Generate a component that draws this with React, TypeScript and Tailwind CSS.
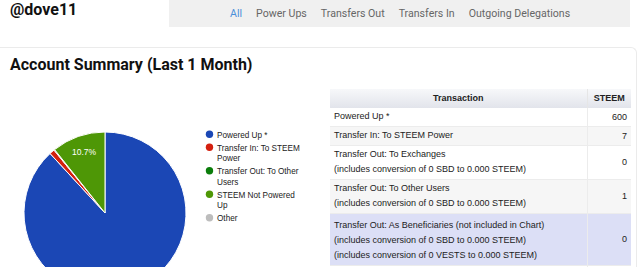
import React from "react"

const rows = [
  { lines: ["Powered Up *"], value: "600", bg: "bg-white", pad: "pt-[1px] pb-[2px]" },
  { lines: ["Transfer In: To STEEM Power"], value: "7", bg: "bg-[#f6f6f6]", pad: "pt-[1px] pb-[2px]" },
  {
    lines: ["Transfer Out: To Exchanges", "(includes conversion of 0 SBD to 0.000 STEEM)"],
    value: "0",
    bg: "bg-white",
    pad: "pt-[1px] pb-[2px]",
  },
  {
    lines: ["Transfer Out: To Other Users", "(includes conversion of 0 SBD to 0.000 STEEM)"],
    value: "1",
    bg: "bg-[#f6f6f6]",
    pad: "pt-[1px] pb-[2px]",
  },
  {
    lines: [
      "Transfer Out: As Beneficiaries (not included in Chart)",
      "(includes conversion of 0 SBD to 0.000 STEEM)",
      "(includes conversion of 0 VESTS to 0.000 STEEM)",
    ],
    value: "0",
    bg: "bg-[#dcdff6]",
    pad: "pt-[4px] pb-[2px]",
  },
  { lines: [""], value: "", bg: "bg-white", pad: "pt-[1px] pb-[2px]" },
]

const slices = [
  { value: 600, color: "#1b47b5" },
  { value: 7, color: "#d4200f" },
  { value: 1, color: "#0b7d0b" },
  { value: 72.8, color: "#4e9706" },
]

const legend = [
  { lines: ["Powered Up *"], color: "#1b47b5" },
  { lines: ["Transfer In: To STEEM", "Power"], color: "#d4200f" },
  { lines: ["Transfer Out: To Other", "Users"], color: "#0b7d0b" },
  { lines: ["STEEM Not Powered", "Up"], color: "#4e9706" },
  { lines: ["Other"], color: "#bdbdbd" },
]

const cx = 105
const cy = 126
const r = 81

function point(f: number) {
  const a = f * Math.PI * 2
  return [cx + r * Math.sin(a), cy - r * Math.cos(a)]
}

function PieChart() {
  const total = slices.reduce((s, x) => s + x.value, 0)
  let acc = 0
  const paths = slices.map((s) => {
    const start = acc / total
    acc += s.value
    const end = acc / total
    const [x1, y1] = point(start)
    const [x2, y2] = point(end)
    const large = end - start > 0.5 ? 1 : 0
    return {
      d: `M ${cx} ${cy} L ${x1} ${y1} A ${r} ${r} 0 ${large} 1 ${x2} ${y2} Z`,
      color: s.color,
    }
  })

  let y = 47.3
  return (
    <svg width="330" height="180" className="block shrink-0">
      {paths.map((p, i) => (
        <path key={i} d={p.d} fill={p.color} stroke="#ffffff" strokeWidth="1" />
      ))}
      <text x="84" y="68" textAnchor="middle" fill="#ffffff" fontSize="8.5" fontFamily="'Liberation Sans', Arial, sans-serif">
        10.7%
      </text>
      {legend.map((item, i) => {
        const top = y
        y += item.lines.length * 10.5 + 2.5
        return (
          <g key={i}>
            <circle cx="209.5" cy={top} r="3.7" fill={item.color} />
            {item.lines.map((l, j) => (
              <text
                key={j}
                x="217"
                y={top + 3.2 + j * 10.6}
                fontSize="8.2"
                fill="#222222"
                fontFamily="'Liberation Sans', Arial, sans-serif"
              >
                {l}
              </text>
            ))}
          </g>
        )
      })}
    </svg>
  )
}

export default function App() {
  return (
    <div className="w-[640px] h-[267px] overflow-hidden bg-white font-['Roboto',sans-serif]">
      <div className="flex h-[27px]">
        <div className="w-[169px] pl-[10px] pt-[0px] text-[16px] leading-[20px] font-bold text-[#111]">
          @dove11
        </div>
        <div className="w-[461px] bg-[#f0f0f0] flex items-center pl-[61px] gap-[14px] text-[10.6px] text-[#666]">
          <span className="text-[#4a8fd9]">All</span>
          <span>Power Ups</span>
          <span>Transfers Out</span>
          <span>Transfers In</span>
          <span>Outgoing Delegations</span>
        </div>
      </div>
      <div className="mt-[20px] w-[637px] border-t border-r border-[#ebebeb] rounded-tr-[6px]">
        <h2 className="pl-[10px] pt-[7px] text-[16px] leading-[20px] font-bold text-[#111]">
          Account Summary (Last 1 Month)
        </h2>
        <div className="flex mt-[12px]">
          <PieChart />
          <table className="mt-[2px] w-[301px] border-collapse font-['Liberation_Sans',Arial,sans-serif] text-[9px] leading-[15px] text-[#222] self-start">
            <thead>
              <tr className="bg-gradient-to-b from-[#f7f8fa] to-[#e2e4eb] h-[19px]">
                <th className="w-[257px] font-bold border-r border-[#e6e6e6]">Transaction</th>
                <th className="font-bold text-center">STEEM</th>
              </tr>
            </thead>
            <tbody>
              {rows.map((row, i) => (
                <tr key={i} className={row.bg}>
                  <td className={`pl-[4px] ${row.pad} border-b border-r border-[#ececec] align-middle`}>
                    {row.lines.map((l, j) => (
                      <div key={j}>{l || "\u00a0"}</div>
                    ))}
                  </td>
                  <td className="pr-[4px] text-right border-b border-[#ececec] align-middle">{row.value}</td>
                </tr>
              ))}
            </tbody>
          </table>
        </div>
      </div>
    </div>
  )
}
